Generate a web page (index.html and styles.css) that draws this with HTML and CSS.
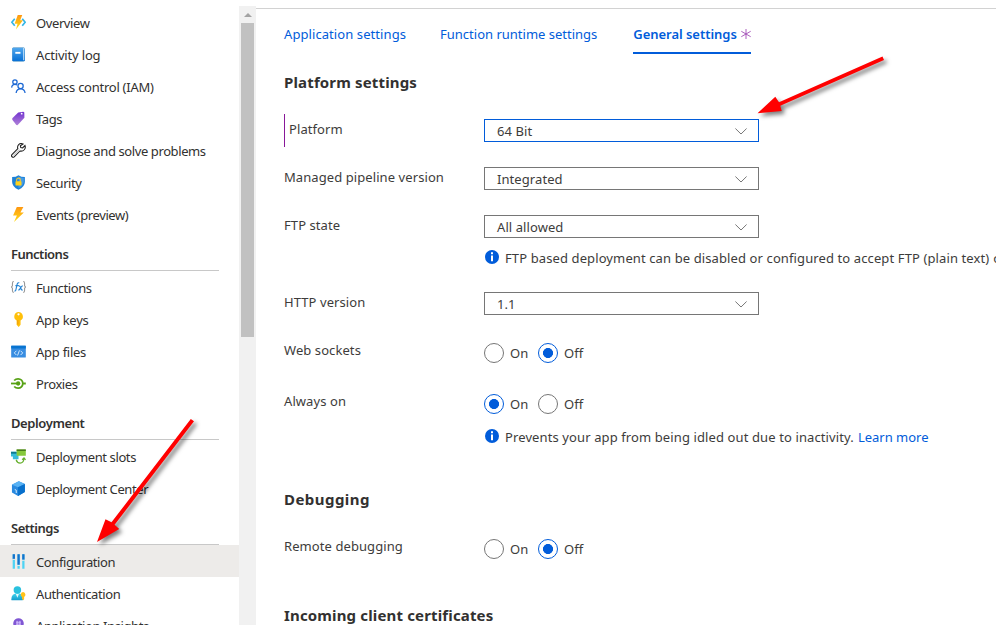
FILE: index.html
```html
<!DOCTYPE html>
<html lang="en">
<head>
<meta charset="utf-8">
<title>Configuration</title>
<link rel="stylesheet" href="styles.css">
</head>
<body>
<svg width="0" height="0" class="defs" aria-hidden="true">
<defs>
<linearGradient id="gold" x1="0" y1="0" x2="0" y2="1"><stop offset="0" stop-color="#fe9712"/><stop offset="1" stop-color="#ffdc15"/></linearGradient>
<linearGradient id="blue" x1="0" y1="0" x2="0" y2="1"><stop offset="0" stop-color="#50a7ee"/><stop offset="1" stop-color="#0870d5"/></linearGradient>
<linearGradient id="purple" x1="0" y1="0" x2="0" y2="1"><stop offset="0" stop-color="#7130cf"/><stop offset="1" stop-color="#af82d8"/></linearGradient>
<linearGradient id="cyan" x1="0" y1="0" x2="0" y2="1"><stop offset="0" stop-color="#43d7ee"/><stop offset="1" stop-color="#139bcc"/></linearGradient>
</defs>
</svg>
<div class="app">
<nav class="sidebar">
<a class="item"><svg viewBox="0 0 16 16"><path d="M4 4 .9 7.8 4 11.5M12 4l3.1 3.8-3.1 3.7" fill="none" stroke="#32b5e5" stroke-width="1.8"/><path d="M7.2 0H12L9.800 5.500h3L5.300 15.500 7 9.200H3.800z" fill="url(#gold)"/></svg><span class="t1">Overview</span></a>
<a class="item"><svg viewBox="0 0 16 16"><rect x="1.5" y=".5" width="13" height="15" rx="1.3" fill="#1975b8"/><rect x="3" y="1" width="11" height="14" fill="#d9eefc"/><path d="M1.500 1h11.600v13.200H14V2h.6v13H2.500q-1 0-1-1z" fill="url(#blue)"/><rect x="4.6" y="5.2" width="5.5" height="2" fill="#fff"/></svg><span class="t2">Activity log</span></a>
<a class="item"><svg viewBox="0 0 16 16" fill="none" stroke="#1c68d4" stroke-width="1.35"><circle cx="4.2" cy="3.2" r="2.3"/><path d="M.7 9.2Q.9 5.8 4.3 5.8q1.5 0 2.2.7"/><circle cx="10.2" cy="7.5" r="2.8"/><path d="M5.5 15q.3-4.5 4.7-4.5T15 15"/></svg><span class="t3">Access control (IAM)</span></a>
<a class="item"><svg viewBox="0 0 16 16"><path d="M1.4 7.8 7.7 1.5 13.2.7l1 1 .1 5.4-7.4 8-1.2-.1-4.3-5.6z" fill="url(#purple)"/><circle cx="11.4" cy="2.8" r="1" fill="#fff"/></svg><span class="t4">Tags</span></a>
<a class="item"><svg viewBox="0 0 16 16"><path d="M12.8 1.1Q10.2-.2 8.2 1.7 6.4 3.6 7.3 6L1 12.4q-1 1.2.1 2.3 1.2 1 2.3 0l6.2-6.2q2.7.6 4.5-1.3 1.8-2 .8-4.5l-2.5 2.5-2-.4-.4-1.8z" fill="#fff" stroke="#222" stroke-width="1.15"/><path d="m2.3 13.4 6.5-6.5" stroke="#888" stroke-width=".6"/></svg><span class="t5">Diagnose and solve problems</span></a>
<a class="item"><svg viewBox="0 0 16 16"><path d="M8 .2q2.600 2 6.800 2v5.200q0 5-6.800 8.400-6.800-3.400-6.800-8.400V2.200Q5.400 2.200 8 .2z" fill="#1d82d8"/><path d="M8 1.500q2 1.400 5.600 1.600v4.300Q13 11.500 8 14z" fill="#479ce5"/><path d="M6 7V5.300a2 2 0 0 1 4 0V7" fill="none" stroke="#edc23a" stroke-width="1.200"/><rect x="4.800" y="6.600" width="6.400" height="4.600" rx=".5" fill="#ffd21a"/></svg><span class="t6">Security</span></a>
<a class="item"><svg viewBox="0 0 16 16"><path d="M6.200 0h7L10 5.800h3.700L3.200 16 6.300 9H2.200z" fill="url(#gold)"/></svg><span class="t7">Events (preview)</span></a>

<h3><span class="h1">Functions</span></h3>
<a class="item"><svg viewBox="0 0 16 16" fill="none"><path d="M3 1.700q-1.500 0-1.500 2v2.500L.5 7.500l1 1.300v2.500q0 2 1.500 2M13 1.700q1.500 0 1.500 2v2.500l1 1.300-1 1.300v2.500q0 2-1.500 2" stroke="#939393" stroke-width="1.100"/><path d="M8.800 3.100Q7 2.500 6.500 4.700L5.200 10.600Q4.900 12 3.600 11.700M4.700 6h3.700M8.500 6.600q1-.4 1.500.9l1 2.500q.5 1 1.600.6M12.700 6.500q-1-.4-2 1.200l-1 1.500q-.9 1.700-1.900 1.200" stroke="#2684d4" stroke-width="1.200"/></svg><span class="t8">Functions</span></a>
<a class="item"><svg viewBox="0 0 16 16"><path d="M8 0a4.800 4.800 0 0 1 2.200 9v4.600L8.200 16 6 13.500V9A4.800 4.800 0 0 1 8 0z" fill="#ffc00a"/><circle cx="8" cy="2.500" r="1.200" fill="#fff"/><path d="M7.300 8.500v4.800" stroke="#ef9a08" stroke-width="1.100"/></svg><span class="t9">App keys</span></a>
<a class="item"><svg viewBox="0 0 16 16"><rect x=".2" y="1.800" width="15.600" height="12.700" rx=".6" fill="#388de1"/><path d="M.2 1.800h15.600v3H.2z" fill="#0874d1"/><path d="M5.800 7.200 3.500 9.500l2.300 2.300m4.400-4.600 2.300 2.300-2.300 2.300M9 6.800l-2 5.500" stroke="#d7ecff" fill="none"/></svg><span class="t10">App files</span></a>
<a class="item"><svg viewBox="0 0 16 16" fill="none" stroke="#57a115" stroke-width="1.900"><path d="M3.400 4.800Q5 3 7.600 3a5 5 0 0 1 0 10Q5 13 3.400 11.200M12.500 8h3.300"/><circle cx="7.600" cy="8" r="2.300" fill="#57a115" stroke="none"/><path d="M0 8h7"/></svg><span class="t11">Proxies</span></a>

<h3><span class="h2">Deployment</span></h3>
<a class="item"><svg viewBox="0 0 16 16"><path d="M0 3h8v8H2V8H0z" fill="#35bbdc"/><path d="M0 3h6v2H0z" fill="#0d7991"/><path d="M6 .5h9.800v6.700H6z" fill="#86c93b"/><path d="M6 .5h9.800v1.600H6z" fill="#46791c"/><path d="M5.500 11.500q1 3.500 4.200 3.500 3.800 0 4.100-4.800M11.900 11.500l2-2 1.600 2" fill="none" stroke="#65af2b" stroke-width="1.300"/></svg><span class="t12">Deployment slots</span></a>
<a class="item"><svg viewBox="0 0 16 16"><path d="m8.300.3 6.500 2.900v8.500L7.500 15.900 1 12.200V4z" fill="#2989df"/><path d="m1 4 6.500 2.600 7.300-3.400L8.300.3z" fill="#58b2f4"/><path d="M7.500 6.600v9.300l7.300-4.200V3.200z" fill="#0870cc"/><path d="m4 9 1.600.8v3" stroke="#def1ff" fill="none"/></svg><span class="t13">Deployment Center</span></a>

<h3><span class="h3">Settings</span></h3>
<a class="item active"><svg viewBox="0 0 16 16"><path d="M1.800.2h2.400v15.600H1.800zM6.900.2h2.400v15.600H6.900zM12 .2h2.400v15.600H12z" fill="#4ed3f4"/><path d="M1.800.2h2.400v5H1.800zM6.900.2h2.400v11.300H6.900zM12 .2h2.400v6H12z" fill="#1671ca"/><path d="M1.500 5.700h3M6.600 12.200h3M11.700 6.700h3" stroke="#edebe9" stroke-width="1"/></svg><span class="t14">Configuration</span></a>
<a class="item"><svg viewBox="0 0 16 16"><path d="M.3 14.600Q.5 7.800 6.800 7.800t6.300 6q0 1.500-1 1.500H1.300q-1 0-1-.7z" fill="url(#cyan)"/><circle cx="6.800" cy="4.200" r="4" fill="#2ac1de"/><path d="m5.200 8.500 1.600 4 1.600-4z" fill="#e3f9fe"/><path d="M13 6.500a2.800 2.800 0 0 1 1 5.200v2.400l-1 1-1.200-1.200v-2.200A2.800 2.800 0 0 1 13 6.500z" fill="#ffc21a"/></svg><span class="t15">Authentication</span></a>
<a class="item"><svg viewBox="0 0 16 16"><path d="M8 .2a5.500 5.500 0 0 1 3.200 10V13H4.800v-2.800A5.500 5.500 0 0 1 8 .2z" fill="#8057d3"/><path d="M5.500 4.500h5M6.500 3v6m3-6v6M5.500 6.500h5" stroke="#d5c2ff"/></svg><span class="t16">Application Insights</span></a>
</nav>
<div class="scrollbar"><i class="up"></i><div class="thumb"></div></div>
<main>
<div class="tabs"><a><span class="a1">Application settings</span></a><a><span class="a2">Function runtime settings</span></a><a class="selected"><span class="a3">General settings</span><svg width="10" height="10" viewBox="0 0 10 10"><path d="M5 0v10M.3 2.300l9.400 5.400m0-5.400L.3 7.700" stroke="#a24db5" stroke-width=".9"/></svg></a></div>
<h2 class="first"><span class="b1">Platform settings</span></h2>
<div class="row"><label class="changed"><span class="l1">Platform</span></label><div class="select focus"><span class="s1">64 Bit</span><svg viewBox="0 0 12 7"><path d="m.4.5 5.600 5.500L11.600.5"/></svg></div></div>
<div class="row"><label><span class="l2">Managed pipeline version</span></label><div class="select"><span class="s2">Integrated</span><svg viewBox="0 0 12 7"><path d="m.4.5 5.600 5.500L11.600.5"/></svg></div></div>
<div class="row ftp"><label><span class="l3">FTP state</span></label><div><div class="select"><span class="s3">All allowed</span><svg viewBox="0 0 12 7"><path d="m.4.5 5.600 5.500L11.600.5"/></svg></div>
<p class="info"><svg viewBox="0 0 14 14"><circle cx="7" cy="7" r="7" fill="#015cda"/><path d="M6 2.200h2v2H6zM6 5.500h2v5.700H6z" fill="#fff"/></svg><span class="p1">FTP based deployment can be disabled or configured to accept FTP (plain text)</span><span class="tail">or</span></p></div></div>
<div class="row http"><label><span class="l4">HTTP version</span></label><div class="select"><span class="s4">1.1</span><svg viewBox="0 0 12 7"><path d="m.4.5 5.600 5.500L11.600.5"/></svg></div></div>
<div class="row radios"><label><span class="l5">Web sockets</span></label><div class="choices"><i class="radio"></i><span class="on">On</span><i class="radio checked"></i><span class="off">Off</span></div></div>
<div class="row radios always"><label><span class="l6">Always on</span></label><div><div class="choices"><i class="radio checked"></i><span class="on">On</span><i class="radio"></i><span class="off">Off</span></div>
<p class="info"><svg viewBox="0 0 14 14"><circle cx="7" cy="7" r="7" fill="#015cda"/><path d="M6 2.200h2v2H6zM6 5.500h2v5.700H6z" fill="#fff"/></svg><span class="p2">Prevents your app from being idled out due to inactivity.</span><a class="p3">Learn more</a></p></div></div>
<h2><span class="b2">Debugging</span></h2>
<div class="row radios remote"><label><span class="l7">Remote debugging</span></label><div class="choices"><i class="radio"></i><span class="on">On</span><i class="radio checked"></i><span class="off">Off</span></div></div>
<h2><span class="b3">Incoming client certificates</span></h2>
</main>
</div>
<svg class="arrows" width="996" height="625" viewBox="0 0 996 625"><g fill="red" stroke="none"><path d="M882.500 56.500 779 102.300l-3.700-5.500-17.800 16.500 24.200-2.400-1.400-5.100L884 60z"/><path d="m190.800 419-79.300 103.300-6-3.100-8.500 22.800 22.200-13-4.600-4.200L194 421.300z"/></g></svg>
</body>
</html>
```
FILE: styles.css
```css
* { box-sizing: border-box; }
body { margin: 0; width: 996px; height: 625px; overflow: hidden; background: #fff; color: #323130; font: 13px/20px "Noto Sans", "Open Sans", sans-serif; }
.defs { position: absolute; }
.app { display: flex; height: 625px; overflow: hidden; }
.sidebar { flex: 0 0 239px; padding-top: 6px; letter-spacing: -.4px; }
span { white-space: nowrap; }
.item { display: flex; align-items: center; height: 32px; padding: 0 0 0 11px; }
.item svg { width: 15px; height: 15px; margin-right: 10px; flex: none; }
.item span { padding-top: 2px; }
.item.active { background: #edebe9; }
.t2 { letter-spacing: -.17px; }
.t3, .t9, .t10 { letter-spacing: -.26px; }
h3 { margin: 0 20px 0 11px; height: 41px; padding-top: 14px; border-bottom: 1px solid #c8c8c8; font-size: 13px; font-weight: 600; line-height: 20px; }
.h1, .h3 { letter-spacing: -.5px; }
.scrollbar { flex: 0 0 17px; margin-top: 6px; background: #f1f1f1; }
.up { display: block; width: 0; height: 0; margin: 7px 0 0 5px; border: 4px solid transparent; border-top: 0; border-bottom-color: #a3a3a3; }
.thumb { width: 13px; height: 314px; margin: 6px 0 0 2px; background: #c1c1c1; }
main { flex: 1; min-width: 0; margin-top: 8px; padding-left: 28px; border-top: 1px solid #d2d2d2; overflow: hidden; color: #3d3c3b; letter-spacing: .08px; }
.tabs { display: flex; height: 45px; color: #015cda; }
.tabs a { display: flex; align-items: center; height: 45px; margin-right: 34px; padding-top: 4px; white-space: nowrap; }
.tabs a:nth-child(2) { margin-right: 36px; }
.a1 { letter-spacing: .08px; }
.a2 { letter-spacing: 0; }
.a3 { letter-spacing: -.04px; }
.tabs .selected { width: 118px; margin: 0; border-bottom: 2px solid #015cda; font-weight: 600; justify-content: space-between; padding-top: 6px; }
h2 { margin: 0; font-size: 15px; line-height: 20px; height: 50px; font-weight: 700; color: #323130; letter-spacing: .15px; }
h2 span { position: relative; top: -1px; }
.b2 { letter-spacing: .45px; }
h2.first { padding-top: 19px; height: 65px; }
.row { display: grid; grid-template-columns: 200px 1fr; height: 48px; align-items: start; }
label { display: block; }
.changed { border-left: 1px solid #881798; padding: 5px 0 8px 4px; margin-top: -5px; }
.select { display: flex; align-items: center; justify-content: space-between; width: 275px; height: 23px; padding: 1px 11px 0 12px; border: 1px solid #767676; }
.select.focus { border-color: #015cda; }
.select svg { width: 12px; height: 7px; fill: none; stroke: #777; stroke-width: 1; }
.row.ftp { height: 77px; }
.row.http { height: 51px; }
.info { display: flex; align-items: center; margin: 10px 0 0 1px; letter-spacing: .11px; }
.info svg { width: 14px; height: 14px; margin-right: 6px; flex: none; position: relative; top: -1px; }
.info .tail, .info a { margin-left: 4px; }
.info a { color: #015cda; white-space: nowrap; letter-spacing: 0; }
.row.radios { height: 51px; }
.radios label { margin-top: -3px; }
.choices { display: flex; height: 20px; align-items: center; letter-spacing: 0; }
.radio { width: 20px; height: 20px; border: 1px solid #767676; border-radius: 50%; flex: none; }
.radio.checked { border-color: #015cda; background: radial-gradient(circle, #015cda 0 4.700px, #fff 5.300px); }
.choices span { margin-left: 6px; width: 28px; }
.row.always { height: 96px; }
.always .info { margin-top: 13px; }
.always + h2 { height: 49px; }
.row.remote { height: 67px; }
.arrows { position: absolute; left: 0; top: 0; pointer-events: none; filter: drop-shadow(3px 3px 2px rgba(0,0,0,.5)); }
```
